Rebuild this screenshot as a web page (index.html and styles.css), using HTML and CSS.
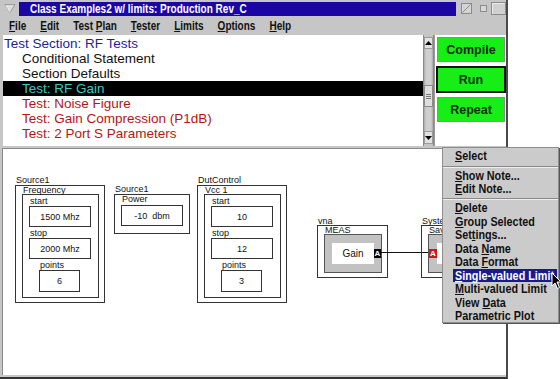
FILE: index.html
```html
<!DOCTYPE html>
<html>
<head>
<meta charset="utf-8">
<link rel="stylesheet" href="styles.css">
</head>
<body>
<div class="window">
  <div class="titlebar">
    <div class="tb-menu">
      <svg width="12" height="11" viewBox="0 0 12 11"><path d="M1 1.5 H11 L6 9.5 Z" fill="#dcdcdc" stroke="#9a9a9a" stroke-width="1"/><path d="M2 2.5 L6 9" stroke="#f4f4f4" stroke-width="1"/></svg>
    </div>
    <div class="tb-title"><span class="sx">Class Examples2 w/ limits: Production Rev_C</span></div>
    <div class="tb-btns">
      <svg class="tb-zoom" width="11" height="11" viewBox="0 0 11 11"><rect x="0.5" y="0.5" width="10" height="10" fill="#d4d4d4" stroke="#8c8c8c"/><path d="M1.5 9.5 L9.5 1.5" stroke="#8c8c8c"/></svg>
      <svg class="tb-small" width="7" height="7" viewBox="0 0 7 7"><rect x="0.5" y="0.5" width="6" height="6" fill="#d8d8d8" stroke="#8c8c8c"/></svg>
      <svg class="tb-large" width="15" height="13" viewBox="0 0 15 13"><rect x="0.5" y="0.5" width="14" height="12" fill="#d0d0d0" stroke="#8c8c8c"/><path d="M1.5 11.5 V1.5 H13.5" stroke="#ececec" fill="none"/></svg>
    </div>
  </div>
  <div class="menubar">
    <div class="mb-inner">
      <span><u>F</u>ile</span>
      <span><u>E</u>dit</span>
      <span>Test <u>P</u>lan</span>
      <span><u>T</u>ester</span>
      <span><u>L</u>imits</span>
      <span><u>O</u>ptions</span>
      <span><u>H</u>elp</span>
    </div>
  </div>
  <div class="top">
    <div class="list">
      <div class="row section">Test Section: RF Tests</div>
      <div class="row">Conditional Statement</div>
      <div class="row">Section Defaults</div>
      <div class="row sel">Test: RF Gain</div>
      <div class="row test">Test: Noise Figure</div>
      <div class="row test">Test: Gain Compression (P1dB)</div>
      <div class="row test">Test: 2 Port S Parameters</div>
    </div>
    <div class="vscroll">
      <div class="sb-arrow up"><svg width="7" height="4" viewBox="0 0 7 4"><path d="M0 4 H7 L3.5 0 Z" fill="#000"/></svg></div>
      <div class="sb-track t1"></div>
      <div class="sb-thumb"><i></i><i></i><i></i></div>
      <div class="sb-track t2"></div>
      <div class="sb-arrow down"><svg width="7" height="4" viewBox="0 0 7 4"><path d="M0 0 H7 L3.5 4 Z" fill="#000"/></svg></div>
    </div>
    <div class="btnpanel">
      <div class="gbtn">Compile</div>
      <div class="gbtn run">Run</div>
      <div class="gbtn">Repeat</div>
    </div>
  </div>
  <div class="divider"></div>
  <div class="canvas">
    <div class="node n-freq">
      <div class="nlabel">Source1</div>
      <div class="outer tall">
        <div class="olabel">Frequency</div>
        <div class="inner">
          <div class="field"><div class="flabel">start</div><div class="fbox">1500 Mhz</div></div>
          <div class="field"><div class="flabel">stop</div><div class="fbox">2000 Mhz</div></div>
          <div class="field pts"><div class="flabel">points</div><div class="fbox">6</div></div>
        </div>
      </div>
    </div>
    <div class="node n-power">
      <div class="nlabel">Source1</div>
      <div class="outer short">
        <div class="olabel lbl10">Power</div>
        <div class="fbox">-10&nbsp; dbm</div>
      </div>
    </div>
    <div class="node n-vcc">
      <div class="nlabel">DutControl</div>
      <div class="outer tall">
        <div class="olabel">Vcc 1</div>
        <div class="inner">
          <div class="field"><div class="flabel">start</div><div class="fbox">10</div></div>
          <div class="field"><div class="flabel">stop</div><div class="fbox">12</div></div>
          <div class="field pts"><div class="flabel">points</div><div class="fbox">3</div></div>
        </div>
      </div>
    </div>
    <div class="node n-vna">
      <div class="nlabel low">vna</div>
      <div class="outer meas">
        <div class="olabel">MEAS</div>
        <div class="gray">
          <div class="wbox">Gain</div>
          <div class="port out">A</div>
        </div>
      </div>
    </div>
    <div class="wire"></div>
    <div class="node n-sys">
      <div class="nlabel low">System1</div>
      <div class="outer meas">
        <div class="olabel">Save</div>
        <div class="gray sys">
          <div class="port in">A</div>
          <div class="wbox"></div>
        </div>
      </div>
    </div>
  </div>
</div>
<div class="ctxmenu">
  <div class="cm-item first"><span class="sx"><u>S</u>elect</span></div>
  <div class="cm-sep"></div>
  <div class="cm-item short"><span class="sx"><u>S</u>how Note...</span></div>
  <div class="cm-item short"><span class="sx"><u>E</u>dit Note...</span></div>
  <div class="cm-sep"></div>
  <div class="cm-item"><span class="sx"><u>D</u>elete</span></div>
  <div class="cm-item"><span class="sx"><u>G</u>roup Selected</span></div>
  <div class="cm-item"><span class="sx">Set<u>t</u>ings...</span></div>
  <div class="cm-item"><span class="sx">Data <u>N</u>ame</span></div>
  <div class="cm-item"><span class="sx">Data <u>F</u>ormat</span></div>
  <div class="cm-item hl"><span class="sx"><u>S</u>ingle-valued Limit</span></div>
  <div class="cm-item"><span class="sx"><u>M</u>ulti-valued Limit</span></div>
  <div class="cm-item"><span class="sx">View <u>D</u>ata</span></div>
  <div class="cm-item"><span class="sx">Parametric Plot</span></div>
</div>
<svg class="cursor" width="12" height="18" viewBox="0 0 12 18"><path d="M1 1 L1 14 L4 11 L6.5 16.5 L8.5 15.5 L6 10 L10 10 Z" fill="#000" stroke="#fff" stroke-width="1" stroke-linejoin="round"/></svg>
</body>
</html>
```
FILE: styles.css
```css
body {
  margin: 0;
  width: 560px;
  height: 379px;
  background: #fff;
  position: relative;
  overflow: hidden;
  font-family: "Liberation Sans", Arial, sans-serif;
}

.sx {
  display: inline-block;
  white-space: nowrap;
  transform: scaleX(0.8);
  transform-origin: 0 50%;
}

.window {
  width: 508px;
  height: 379px;
  background: #c6c6c6;
  box-sizing: border-box;
  border-right: 2px solid #4a4a4a;
  border-bottom: 2px solid #333;
  display: flex;
  flex-direction: column;
}

/* title bar */
.titlebar {
  height: 17px;
  display: flex;
  align-items: center;
  flex-shrink: 0;
}
.tb-menu {
  width: 19px;
  height: 17px;
  display: flex;
  align-items: center;
  justify-content: center;
}
.tb-title {
  width: 437px;
  height: 14px;
  background: #1c06a3;
  color: #fff;
  font-weight: bold;
  font-size: 12.5px;
  line-height: 14px;
  padding-left: 11px;
  box-sizing: border-box;
  white-space: nowrap;
  overflow: hidden;
}
.tb-btns {
  flex: 1;
  display: flex;
  align-items: center;
  padding-left: 5px;
}
.tb-small { margin-left: 8px; }
.tb-large { margin-left: 4px; }

/* menubar */
.menubar {
  height: 18px;
  display: flex;
  align-items: center;
  padding-left: 9px;
  font-weight: bold;
  font-size: 12.5px;
  color: #111;
  flex-shrink: 0;
}
.mb-inner {
  display: flex;
  gap: 17.5px;
  white-space: nowrap;
  transform: scaleX(0.8);
  transform-origin: 0 50%;
}
.menubar u, .ctxmenu u {
  text-underline-offset: 1px;
}

/* top panel */
.top {
  height: 111px;
  margin-left: 3px;
  display: flex;
  background: #fff;
  flex-shrink: 0;
}
.list {
  width: 420px;
  padding-top: 1px;
  box-sizing: border-box;
}
.row {
  height: 15px;
  line-height: 15px;
  font-size: 13.5px;
  padding-left: 19px;
  color: #111;
  white-space: nowrap;
}
.row.section {
  padding-left: 1px;
  color: #1e1e96;
}
.row.sel {
  background: #000;
  color: #3cc8c8;
}
.row.test {
  color: #b31616;
}

/* scrollbar */
.vscroll {
  width: 11px;
  box-sizing: border-box;
  border-left: 1px solid #8a8a8a;
  border-right: 1px solid #8a8a8a;
  background: #c4c4c4;
  display: flex;
  flex-direction: column;
  padding-top: 2px;
  padding-bottom: 2px;
}
.sb-arrow {
  height: 12px;
  background: #e2e2e2;
  border: 1px solid #9a9a9a;
  box-sizing: border-box;
  display: flex;
  align-items: center;
  justify-content: center;
}
.sb-arrow.down { height: 13px; }
.sb-track {
  background: linear-gradient(to right, #a8a8a8 0, #cfcfcf 2px, #cfcfcf 7px, #a8a8a8 9px);
}
.sb-track.t1 { height: 36px; }
.sb-track.t2 { height: 24px; }
.sb-thumb {
  height: 22px;
  background: #dedede;
  border: 1px solid #8a8a8a;
  box-sizing: border-box;
  display: flex;
  flex-direction: column;
  align-items: center;
  justify-content: center;
  gap: 1px;
}
.sb-thumb i {
  display: block;
  width: 5px;
  height: 1px;
  background: #777;
}

/* buttons */
.btnpanel {
  width: 72px;
  box-sizing: border-box;
  border-left: 1px solid #9a9a9a;
  padding: 2px 0 0 2px;
  display: flex;
  flex-direction: column;
  align-items: flex-start;
}
.gbtn {
  width: 68px;
  height: 25px;
  box-sizing: border-box;
  background: #16ee16;
  border: 1px solid #8c8c8c;
  color: #0b2a0b;
  font-weight: bold;
  font-size: 12.5px;
  display: flex;
  align-items: center;
  justify-content: center;
  margin-bottom: 5px;
}
.gbtn.run {
  width: 70px;
  height: 27px;
  margin-left: -1px;
  margin-top: -1px;
  margin-bottom: 4px;
  border: 2px solid #111;
}

.divider {
  height: 2px;
  flex-shrink: 0;
}

/* canvas */
.canvas {
  flex: 1;
  margin-left: 2px;
  margin-bottom: 2px;
  border-top: 1px solid #8a8a8a;
  border-left: 1px solid #8a8a8a;
  background: #fff;
  position: relative;
  font-size: 9px;
  color: #111;
}
.node {
  position: absolute;
}
.n-freq { left: 12px; top: 27px; }
.n-power { left: 111px; top: 36px; }
.n-vcc { left: 194px; top: 27px; }
.n-vna { left: 314px; top: 69px; }
.n-sys {
  left: 418px;
  top: 69px;
  width: 21px;
  overflow: hidden;
}

.nlabel {
  height: 9px;
  line-height: 9px;
  padding-left: 1px;
  white-space: nowrap;
}
.nlabel.low {
  height: 7px;
  line-height: 7px;
}
.outer {
  border: 1px solid #333;
  box-sizing: border-box;
  padding-left: 6px;
}
.outer.tall { width: 90px; height: 118px; }
.outer.short { width: 76px; height: 40px; }
.outer.meas { width: 71px; height: 53px; }
.olabel {
  height: 8px;
  line-height: 9px;
  padding-left: 1px;
  white-space: nowrap;
}
.olabel.lbl10 { height: 10px; }

.inner {
  width: 77px;
  height: 104px;
  border: 1px solid #333;
  box-sizing: border-box;
  padding: 1px 0 0 6px;
}
.field { margin-bottom: 1px; }
.flabel {
  height: 10px;
  line-height: 11px;
  padding-left: 1px;
}
.fbox {
  width: 62px;
  height: 21px;
  border: 1px solid #333;
  box-sizing: border-box;
  display: flex;
  align-items: center;
  justify-content: center;
  white-space: nowrap;
}
.field.pts { margin-left: 10px; }
.field.pts .fbox { width: 41px; height: 22px; }

.gray {
  width: 58px;
  height: 39px;
  border: 1px solid #555;
  box-sizing: border-box;
  background: #c2c2c2;
  display: flex;
  align-items: center;
  padding-left: 7px;
}
.gray.sys { padding-left: 0; }
.wbox {
  width: 42px;
  height: 21px;
  background: #fff;
  display: flex;
  align-items: center;
  justify-content: center;
  font-size: 10px;
}
.port {
  width: 7px;
  height: 9px;
  color: #fff;
  font-size: 8px;
  font-weight: bold;
  line-height: 9px;
  text-align: center;
}
.port.out { background: #000; }
.port.in { background: #d4141e; width: 8px; flex-shrink: 0; }
.wire {
  position: absolute;
  left: 377px;
  top: 103px;
  width: 48px;
  height: 1px;
  background: #111;
}

/* context menu */
.ctxmenu {
  position: absolute;
  left: 442px;
  top: 147px;
  width: 117px;
  height: 176px;
  box-sizing: border-box;
  background: #cbcbcb;
  border: 1px solid #8e8e8e;
  box-shadow: 1px 1px 0 #555;
  padding-top: 1px;
  font-weight: bold;
  font-size: 13.5px;
  color: #111;
}
.cm-item {
  height: 13.5px;
  line-height: 13.5px;
  margin-left: 10px;
  margin-right: 1px;
  padding-left: 2px;
  white-space: nowrap;
}
.cm-item.first { height: 14px; line-height: 14px; }
.cm-item.short { height: 13px; line-height: 13px; }
.cm-item.hl {
  background: #1a1a8c;
  color: #fff;
}
.cm-sep {
  height: 6px;
  position: relative;
}
.cm-sep::after {
  content: "";
  position: absolute;
  left: 0;
  right: 0;
  top: 3px;
  border-top: 1px solid #8a8a8a;
  border-bottom: 1px solid #eee;
}

.cursor {
  position: absolute;
  left: 551px;
  top: 272px;
}
```
